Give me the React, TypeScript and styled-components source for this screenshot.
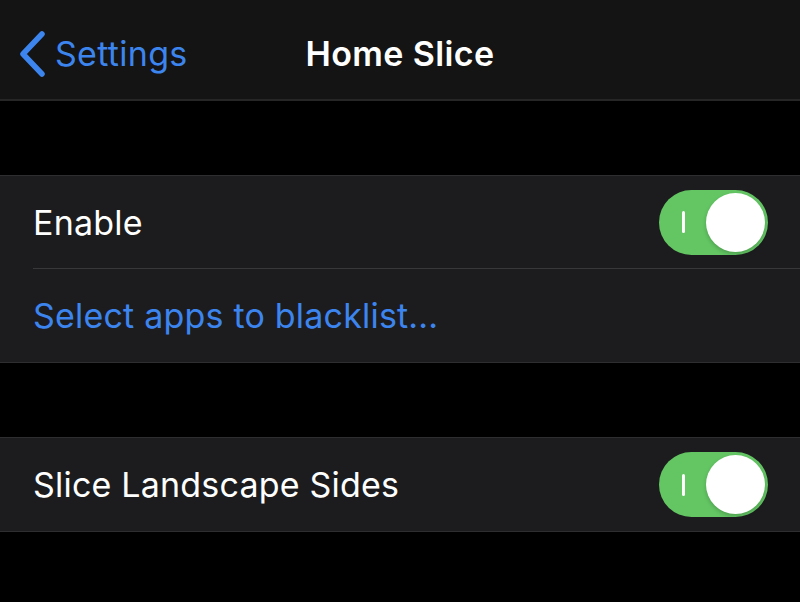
import React from 'react';
import styled, {createGlobalStyle} from 'styled-components';

const GlobalStyle = createGlobalStyle`
  html, body {
    margin: 0;
    padding: 0;
    background: #000;
  }
  body {
    font-family: Inter, "Noto Sans", sans-serif;
    -webkit-font-smoothing: antialiased;
  }
`;

const Screen = styled.div`
  width: 800px;
  height: 602px;
  background: #000;
  overflow: hidden;
  display: flex;
  flex-direction: column;
`;

const NavBar = styled.div`
  height: 101px;
  flex: none;
  box-sizing: border-box;
  padding-top: 8px;
  background: #141414;
  border-bottom: 2px solid #262626;
  display: grid;
  grid-template-columns: 1fr auto 1fr;
  align-items: center;
`;

const BackButton = styled.div`
  display: flex;
  align-items: center;
  gap: 9px;
  padding-left: 18px;
  color: #3d85ee;
  font-size: 34px;
  letter-spacing: 0.3px;
`;

const Title = styled.div`
  color: #fff;
  font-size: 34px;
  font-weight: 600;
  letter-spacing: 0.4px;
`;

const Gap = styled.div<{$h: number}>`
  height: ${p => p.$h}px;
  flex: none;
`;

const Group = styled.div`
  flex: none;
  background: #1c1c1e;
  border-top: 1px solid #2e2e30;
  border-bottom: 1px solid #2e2e30;
`;

const Row = styled.div<{$divider?: boolean}>`
  height: 93px;
  margin-left: 33px;
  padding-right: 32px;
  display: flex;
  align-items: center;
  justify-content: space-between;
  box-sizing: border-box;
  border-bottom: ${p => (p.$divider ? '1px solid #38383a' : 'none')};
`;

const Label = styled.span<{$link?: boolean}>`
  color: ${p => (p.$link ? '#3d85ee' : '#fff')};
  font-size: 34px;
  letter-spacing: 0.2px;
`;

const Track = styled.div`
  width: 109px;
  height: 65px;
  border-radius: 33px;
  background: #63c663;
  display: flex;
  align-items: center;
  justify-content: space-between;
  padding: 0 3px 0 23px;
  box-sizing: border-box;
`;

const OnMark = styled.span`
  width: 3px;
  height: 22px;
  border-radius: 2px;
  background: #fff;
`;

const Knob = styled.span`
  width: 59px;
  height: 59px;
  border-radius: 50%;
  background: #fff;
  box-shadow: 0 2px 4px rgba(0, 0, 0, 0.2);
`;

const Chevron = () => (
  <svg width="28" height="46" viewBox="0 0 28 46" fill="none">
    <path d="M24 3 L5 23 L24 43" stroke="#3d85ee" strokeWidth="5.5" strokeLinecap="round" strokeLinejoin="round" />
  </svg>
);

const Switch = () => (
  <Track>
    <OnMark />
    <Knob />
  </Track>
);

export default function App() {
  return (
    <Screen>
      <GlobalStyle />
      <NavBar>
        <BackButton>
          <Chevron />
          Settings
        </BackButton>
        <Title>Home Slice</Title>
        <div />
      </NavBar>
      <Gap $h={74} />
      <Group>
        <Row $divider>
          <Label>Enable</Label>
          <Switch />
        </Row>
        <Row>
          <Label $link>Select apps to blacklist...</Label>
        </Row>
      </Group>
      <Gap $h={74} />
      <Group>
        <Row>
          <Label>Slice Landscape Sides</Label>
          <Switch />
        </Row>
      </Group>
    </Screen>
  );
}
